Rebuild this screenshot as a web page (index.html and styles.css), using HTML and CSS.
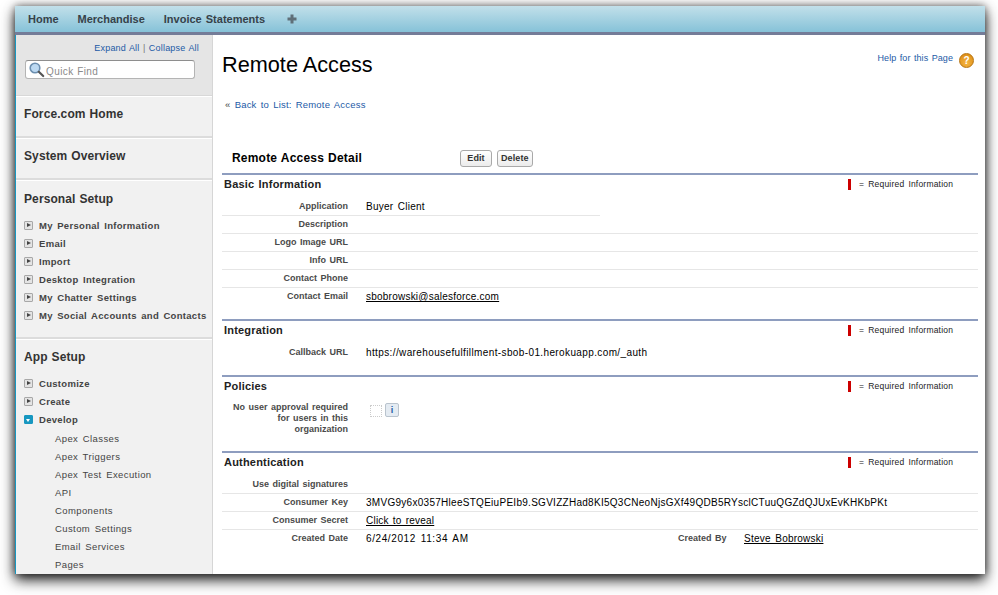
FILE: index.html
```html
<!DOCTYPE html>
<html lang="en">
<head>
    <meta charset="UTF-8">
    <title>Remote Access</title>
    <link rel="stylesheet" href="styles.css">
</head>
<body>
<div class="window">
    <!-- Tabs -->
    <div class="tabbar">
        <a class="tab">Home</a>
        <a class="tab">Merchandise</a>
        <a class="tab">Invoice Statements</a>
        <svg class="tab-plus" width="10" height="10" viewBox="0 0 10 10"><path d="M3.5 0.5h3v3h3v3h-3v3h-3v-3h-3v-3h3z" fill="#5f6f78"/></svg>
    </div>

    <div class="columns">
        <!-- Sidebar -->
        <div class="sidebar">
            <div class="find-box">
                <div class="expand"><a>Expand All</a> | <a>Collapse All</a></div>
                <div class="find-input">
                    <svg width="17" height="17" viewBox="0 0 17 17"><circle cx="7" cy="7" r="4.8" fill="#bcd9f2" stroke="#6c8fb0" stroke-width="1.6"/><path d="M10.8 10.8l4.4 4.2" stroke="#555" stroke-width="2.2" stroke-linecap="round"/></svg>
                    <span>Quick Find</span>
                </div>
            </div>
            <div class="side-block single"><h2>Force.com Home</h2></div>
            <div class="side-block single"><h2>System Overview</h2></div>
            <div class="side-block personal">
                <h2>Personal Setup</h2>
                <ul class="side-list">
                    <li><i class="arrow"></i>My Personal Information</li>
                    <li><i class="arrow"></i>Email</li>
                    <li><i class="arrow"></i>Import</li>
                    <li><i class="arrow"></i>Desktop Integration</li>
                    <li><i class="arrow"></i>My Chatter Settings</li>
                    <li><i class="arrow"></i>My Social Accounts and Contacts</li>
                </ul>
            </div>
            <div class="side-block last">
                <h2>App Setup</h2>
                <ul class="side-list">
                    <li><i class="arrow"></i>Customize</li>
                    <li><i class="arrow"></i>Create</li>
                    <li><i class="arrow open"></i>Develop</li>
                </ul>
                <ul class="sub-list">
                    <li>Apex Classes</li>
                    <li>Apex Triggers</li>
                    <li>Apex Test Execution</li>
                    <li>API</li>
                    <li>Components</li>
                    <li>Custom Settings</li>
                    <li>Email Services</li>
                    <li>Pages</li>
                </ul>
            </div>
        </div>

        <!-- Main content -->
        <div class="main">
            <div class="page-head">
                <h1>Remote Access</h1>
                <div class="help"><a>Help for this Page</a><span class="help-icon">?</span></div>
            </div>
            <div class="back">&laquo; <a>Back to List: Remote Access</a></div>

            <div class="detail-head">
                <h3>Remote Access Detail</h3>
                <button>Edit</button>
                <button>Delete</button>
            </div>

            <div class="section">
                <div class="section-head"><h4>Basic Information</h4><div class="required"><i></i>= Required Information</div></div>
                <div class="row half"><div class="label">Application</div><div class="value">Buyer Client</div></div>
                <div class="row"><div class="label">Description</div><div class="value"></div></div>
                <div class="row"><div class="label">Logo Image URL</div><div class="value"></div></div>
                <div class="row"><div class="label">Info URL</div><div class="value"></div></div>
                <div class="row"><div class="label">Contact Phone</div><div class="value"></div></div>
                <div class="row plain"><div class="label">Contact Email</div><div class="value"><a>sbobrowski@salesforce.com</a></div></div>
            </div>

            <div class="section integration">
                <div class="section-head"><h4>Integration</h4><div class="required"><i></i>= Required Information</div></div>
                <div class="row plain"><div class="label">Callback URL</div><div class="value callback">https://warehousefulfillment-sbob-01.herokuapp.com/_auth</div></div>
            </div>

            <div class="section policies">
                <div class="section-head"><h4>Policies</h4><div class="required"><i></i>= Required Information</div></div>
                <div class="row plain tall">
                    <div class="label">No user approval required for users in this organization</div>
                    <div class="value"><span class="checkbox"></span><span class="info-btn">i</span></div>
                </div>
            </div>

            <div class="section auth">
                <div class="section-head"><h4>Authentication</h4><div class="required"><i></i>= Required Information</div></div>
                <div class="row"><div class="label">Use digital signatures</div><div class="value"></div></div>
                <div class="row"><div class="label">Consumer Key</div><div class="value key">3MVG9y6x0357HleeSTQEiuPEIb9.SGVIZZHad8KI5Q3CNeoNjsGXf49QDB5RYsclCTuuQGZdQJUxEvKHKbPKt</div></div>
                <div class="row"><div class="label">Consumer Secret</div><div class="value reveal"><a>Click to reveal</a></div></div>
                <div class="row plain">
                    <div class="label">Created Date</div><div class="value created">6/24/2012 11:34 AM</div>
                    <div class="label by">Created By</div><div class="value"><a>Steve Bobrowski</a></div>
                </div>
            </div>
        </div>
    </div>
</div>
</body>
</html>
```

FILE: styles.css
```css
html, body {
    margin: 0;
    padding: 0;
    height: 100%;
    background: #fff;
    overflow: hidden;
}

body {
    font-family: "Liberation Sans", Arial, sans-serif;
    font-size: 10px;
    letter-spacing: 0.2px;
    word-spacing: 1.5px;
    color: #222;
}

.window {
    width: 970px;
    height: 568px;
    margin: 6px 0 0 15px;
    background: #fff;
    overflow: hidden;
    box-shadow: 0 6px 13px rgba(0, 0, 0, 0.85), 0 0 8px rgba(0, 0, 0, 0.5);
}

/* Tabs */
.tabbar {
    height: 26px;
    display: flex;
    align-items: center;
    padding-left: 13px;
    background: linear-gradient(#c2e0ea, #86c2d8);
    border-bottom: 3px solid #747c98;
}

.tab {
    font-size: 11px;
    font-weight: bold;
    letter-spacing: 0;
    word-spacing: 1px;
    color: #36424a;
    margin-right: 19px;
}

.tab-plus {
    margin-left: 3px;
}

.columns {
    display: flex;
    height: 539px;
}

/* Sidebar */
.sidebar {
    width: 198px;
    flex: none;
    box-sizing: border-box;
    background: #f1f1f1;
    border-left: 1px solid #1797c0;
    border-right: 1px solid #d6d6d6;
    overflow: hidden;
    color: #333;
}

.find-box {
    box-sizing: border-box;
    height: 61px;
    background: #e5e5e5;
    text-align: right;
    padding: 8px 13px 0 9px;
    border-bottom: 1px solid #d8d8d8;
}

.expand {
    font-size: 9px;
    word-spacing: 0.7px;
    color: #777;
}

.expand a,
.back a,
.help a {
    color: #1c5aa6;
}

.find-input {
    display: flex;
    align-items: center;
    height: 17px;
    margin-top: 7px;
    padding-left: 2px;
    width: 166px;
    background: #fff;
    border: 1px solid #b4b4b4;
    border-top-color: #8e8e8e;
    border-radius: 3px;
    text-align: left;
    color: #8a8a8a;
    letter-spacing: 0.4px;
    word-spacing: 0.5px;
}

.find-input span {
    margin: 3px 0 0 1px;
}

.side-block {
    padding: 10px 0 0 8px;
    border-top: 1px solid #fff;
    border-bottom: 2px solid #dcdcdc;
}

.side-block h2 {
    margin: 0;
    font-size: 12px;
    line-height: 15px;
    font-weight: bold;
    letter-spacing: 0.1px;
    word-spacing: 0.5px;
    color: #333;
}

.side-block.single {
    height: 29px;
}

.side-block.personal {
    padding-top: 11px;
}

.side-block.last {
    border-bottom: 0;
}

.side-list,
.sub-list {
    list-style: none;
    margin: 0;
    padding: 0;
}

.side-list {
    margin-top: 10px;
    padding-bottom: 13px;
}

.personal .side-list {
    margin-top: 9px;
}

.side-list li {
    display: flex;
    align-items: center;
    height: 18px;
    font-size: 9.5px;
    font-weight: bold;
    letter-spacing: 0.3px;
    color: #444;
}

.arrow {
    width: 7px;
    height: 7px;
    margin-right: 6px;
    flex: none;
    position: relative;
    background: #e4e4e4;
    border: 1px solid #a8a8a8;
    border-radius: 1px;
}

.arrow::after {
    content: "";
    position: absolute;
    left: 2px;
    top: 1px;
    border-left: 4px solid #444;
    border-top: 2.5px solid transparent;
    border-bottom: 2.5px solid transparent;
}

.arrow.open {
    background: #1797c0;
    border-color: #1797c0;
}

.arrow.open::after {
    left: 1px;
    top: 3px;
    border-top: 3px solid #fff;
    border-bottom: 0;
    border-left: 2.5px solid transparent;
    border-right: 2.5px solid transparent;
}

.side-block.last .side-list {
    margin-top: 9px;
    padding-bottom: 0;
}

.sub-list {
    padding-left: 31px;
    margin-top: 2px;
}

.sub-list li {
    height: 18px;
    line-height: 18px;
    font-size: 9.5px;
    letter-spacing: 0.4px;
    color: #444;
}

/* Main */
.main {
    flex: 1;
    padding: 0 7px 0 9px;
    min-width: 0;
}

.page-head {
    display: flex;
    justify-content: space-between;
    height: 56px;
}

.page-head h1 {
    margin: 17px 0 0;
    font-size: 21.7px;
    line-height: 26px;
    font-weight: normal;
    letter-spacing: 0;
    word-spacing: 0;
    color: #000;
}

.help {
    display: flex;
    align-items: flex-start;
    margin-top: 18px;
    font-size: 9px;
    letter-spacing: 0.05px;
    word-spacing: 1px;
}

.help-icon {
    width: 13px;
    height: 13px;
    margin: 0 4px 0 6px;
    border-radius: 50%;
    background: radial-gradient(circle at 50% 70%, #f6b642, #d8860f);
    border: 0.5px solid #b8740f;
    color: #fff;
    font-weight: bold;
    font-size: 10px;
    line-height: 13px;
    text-align: center;
}

.back {
    margin: 7px 0 0 3px;
    height: 14px;
    line-height: 14px;
    font-size: 9.5px;
    word-spacing: 1.3px;
    color: #444;
}

.detail-head {
    display: flex;
    align-items: center;
    height: 24px;
    margin-top: 34px;
    margin-bottom: 3px;
    padding-left: 10px;
}

.detail-head h3 {
    margin: 0;
    width: 228px;
    font-size: 12px;
    font-weight: bold;
    color: #000;
    word-spacing: 0.5px;
}

.detail-head button {
    height: 17px;
    padding: 0 3px;
    margin-right: 5px;
    font-family: inherit;
    font-size: 9px;
    letter-spacing: 0.1px;
    font-weight: bold;
    color: #333;
    background: linear-gradient(#fff, #ececec);
    border: 1px solid #a9a9a9;
    border-radius: 3px;
}

.detail-head button:first-of-type {
    width: 32px;
}

.section {
    border-top: 2px solid #8e9dbf;
}

.section-head {
    display: flex;
    justify-content: space-between;
    align-items: center;
    height: 18px;
    padding: 0 7px 5px 2px;
}

.section-head h4 {
    margin: 0;
    font-size: 11px;
    font-weight: bold;
    word-spacing: 1px;
    color: #222;
}

.required {
    display: flex;
    align-items: center;
    font-size: 8.5px;
    color: #222;
    width: 123px;
}

.required i {
    width: 3px;
    height: 11px;
    margin-right: 8px;
    background: #c00;
}

.row {
    display: flex;
    height: 17px;
    border-bottom: 1px solid #e6e6e6;
    line-height: 18px;
}

.row.plain {
    border-bottom: 0;
}

.row.half {
    width: 378px;
}

.label {
    width: 126px;
    flex: none;
    text-align: right;
    font-size: 9px;
    line-height: 16px;
    font-weight: bold;
    letter-spacing: 0;
    word-spacing: 1px;
    color: #4a4a4a;
}

.value {
    margin-left: 18px;
    font-size: 10px;
    letter-spacing: 0.23px;
    color: #000;
    white-space: nowrap;
}

.value a {
    color: #000;
    text-decoration: underline;
}

.callback {
    letter-spacing: 0.38px;
}

.key {
    width: 522px;
    overflow: hidden;
    word-spacing: 0;
    letter-spacing: 0.28px;
}

.reveal {
    word-spacing: 1px;
}

.created {
    width: 312px;
    letter-spacing: 0.6px;
}

.label.by {
    width: 48px;
    margin-left: 0;
    white-space: nowrap;
}

.integration {
    margin-top: 14px;
}

.policies {
    margin-top: 14px;
}

.row.tall {
    height: 51px;
}

.row.tall .label {
    padding-top: 2px;
    line-height: 11px;
}

.checkbox {
    display: inline-block;
    width: 10px;
    height: 10px;
    margin: 5px 3px 0 4px;
    border: 1px dotted #ccc;
    vertical-align: top;
}

.info-btn {
    display: inline-block;
    width: 12px;
    height: 12px;
    margin-top: 3px;
    background: #e4ebf2;
    border: 1px solid #b9c3cd;
    border-radius: 2px;
    color: #1c5aa6;
    font-weight: bold;
    font-size: 9px;
    line-height: 12px;
    text-align: center;
    vertical-align: top;
}
```
